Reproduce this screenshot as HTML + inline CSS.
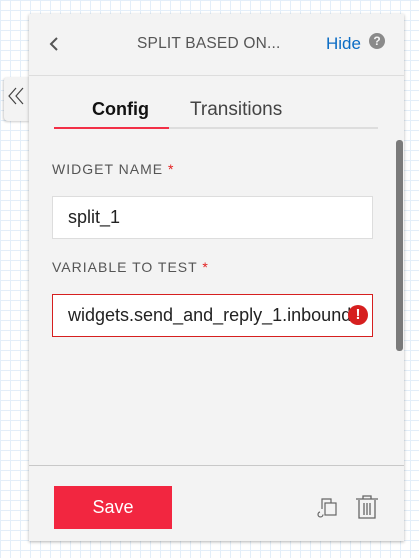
<!DOCTYPE html>
<html><head><style>
*{box-sizing:border-box;margin:0;padding:0}
body{width:419px;height:558px;overflow:hidden;position:relative;font-family:"Liberation Sans",sans-serif;
background-color:#fff;background-image:linear-gradient(#e3eef9 1px,transparent 1px),linear-gradient(90deg,#e3eef9 1px,transparent 1px);background-size:10px 10px}
.panel{position:absolute;left:29px;top:14px;width:375px;height:527px;background:#f3f3f3;box-shadow:0 1px 3px rgba(0,0,0,.3)}
.hdr{height:62px;border-bottom:1px solid #ddd;position:relative}
.title{position:absolute;left:108px;top:21px;font-size:15.5px;color:#555;letter-spacing:.2px}
.back{position:absolute;left:20px;top:22px}
.hide{position:absolute;left:297px;top:20px;font-size:17px;color:#0b6cc4}
.q{position:absolute;left:340px;top:19px;width:16px;height:16px;border-radius:50%;background:#8a8a8a;color:#f3f3f3;font-size:12px;font-weight:bold;text-align:center;line-height:16px}
.tab{position:absolute;left:4px;top:77px;width:26px;height:44px;background:#f3f3f3;border-radius:4px 0 0 4px;box-shadow:-1px 1px 2px rgba(0,0,0,.2)}
.tabs{position:absolute;left:25px;top:82px;width:324px;height:33px;border-bottom:2px solid #ddd}
.t1{position:absolute;left:38px;top:3px;font-size:18px;color:#111;font-weight:bold}
.t2{position:absolute;left:136px;top:3px;font-size:19px;color:#444}
.ul{position:absolute;left:0;bottom:-2px;width:115px;height:2px;background:#f22f46}
.lbl{position:absolute;left:23px;font-size:14px;color:#555;letter-spacing:1px}
.lbl b{color:#e31e1e;font-weight:normal}
.inp{position:absolute;left:23px;width:321px;height:43px;background:#fff;border:1px solid #ddd;font-size:18px;color:#222;padding:10px 0 0 15px;overflow:hidden;white-space:nowrap}
.err{border-color:#d61f1f}
.ex{position:absolute;right:10px;top:10px;width:20px;height:20px;border-radius:50%;background:#d61f1f;color:#fff;font-weight:bold;font-size:15px;text-align:center;line-height:20px}
.sb{position:absolute;left:367px;top:126px;width:7px;height:211px;background:#7a7a7a;border-radius:3px}
.ftr{position:absolute;left:0;top:451px;width:375px;border-top:1px solid #c8c8c8}
.save{position:absolute;left:25px;top:472px;width:118px;height:43px;background:#f22640;color:#fff;font-size:18px;text-align:center;line-height:43px}
</style></head><body>
<div class="tab"><svg width="26" height="44"><path d="M12 11l-7 8 7 8M19 11l-7 8 7 8" stroke="#444" stroke-width="1.2" fill="none"/></svg></div>
<div class="panel">
 <div class="hdr">
  <svg class="back" width="10" height="16"><path d="M8 2L2 8l6 6" stroke="#555" stroke-width="2" fill="none"/></svg>
  <div class="title">SPLIT BASED ON...</div>
  <div class="hide">Hide</div><div class="q">?</div>
 </div>
 <div class="tabs"><div class="t1">Config</div><div class="t2">Transitions</div><div class="ul"></div></div>
 <div class="lbl" style="top:147px">WIDGET NAME <b>*</b></div>
 <div class="inp" style="top:182px">split_1</div>
 <div class="lbl" style="top:245px">VARIABLE TO TEST <b>*</b></div>
 <div class="inp err" style="top:280px;padding-left:15px">widgets.send_and_reply_1.inbound<div class="ex" style="right:4px">!</div></div>
 <div class="sb"></div>
 <div class="ftr"></div>
 <div class="save">Save</div>
 <svg style="position:absolute;left:287px;top:482px" width="30" height="30"><rect x="9" y="7" width="11" height="12" fill="none" stroke="#666" stroke-width="1.2"/><path d="M6 13V3h9v4" fill="none" stroke="#666" stroke-width="1.2"/><path d="M4 16a2.5 2.5 0 1 0 3 2.5" fill="none" stroke="#666" stroke-width="1.2"/></svg>
 <svg style="position:absolute;left:326px;top:481px" width="25" height="30"><path d="M1 4h22M8 4V1h8v3M4 5v18h16V5M9 8v12M12 8v12M15 8v12" fill="none" stroke="#666" stroke-width="1.3"/></svg>
</div>
</body></html>
